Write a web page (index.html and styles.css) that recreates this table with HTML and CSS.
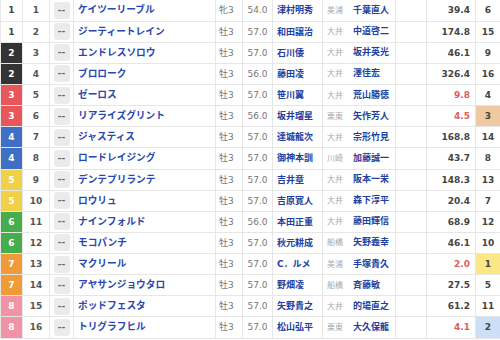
FILE: index.html
```html
<!DOCTYPE html>
<html lang="ja">
<head>
<meta charset="utf-8">
<title>出馬表</title>
<link rel="stylesheet" href="styles.css">
</head>
<body>
<table class="race">
<colgroup>
<col class="c-waku"><col class="c-num"><col class="c-btn"><col class="c-name"><col class="c-sex"><col class="c-wt"><col class="c-jk"><col class="c-tr"><col class="c-blank"><col class="c-odds"><col class="c-pop">
</colgroup>
<tbody>
<tr><td class="waku w1">1</td><td class="num">1</td><td class="btn"><span class="mark">--</span></td><td class="name">ケイツーリーブル</td><td class="sex">牝3</td><td class="wt">54.0</td><td class="jk">津村明秀</td><td class="tr"><span class="area">美浦</span>千葉直人</td><td></td><td class="odds">39.4</td><td class="pop">6</td></tr>
<tr><td class="waku w1">1</td><td class="num">2</td><td class="btn"><span class="mark">--</span></td><td class="name">ジーティートレイン</td><td class="sex">牡3</td><td class="wt">57.0</td><td class="jk">和田譲治</td><td class="tr"><span class="area">大井</span>中道啓二</td><td></td><td class="odds">174.8</td><td class="pop">15</td></tr>
<tr><td class="waku w2">2</td><td class="num">3</td><td class="btn"><span class="mark">--</span></td><td class="name">エンドレスソロウ</td><td class="sex">牡3</td><td class="wt">57.0</td><td class="jk">石川倭</td><td class="tr"><span class="area">大井</span>坂井英光</td><td></td><td class="odds">46.1</td><td class="pop">9</td></tr>
<tr><td class="waku w2">2</td><td class="num">4</td><td class="btn"><span class="mark">--</span></td><td class="name">ブロローク</td><td class="sex">牡3</td><td class="wt">56.0</td><td class="jk">藤田凌</td><td class="tr"><span class="area">大井</span>澤佳宏</td><td></td><td class="odds">326.4</td><td class="pop">16</td></tr>
<tr><td class="waku w3">3</td><td class="num">5</td><td class="btn"><span class="mark">--</span></td><td class="name">ゼーロス</td><td class="sex">牡3</td><td class="wt">57.0</td><td class="jk">笹川翼</td><td class="tr"><span class="area">大井</span>荒山勝徳</td><td></td><td class="odds hot">9.8</td><td class="pop">4</td></tr>
<tr><td class="waku w3">3</td><td class="num">6</td><td class="btn"><span class="mark">--</span></td><td class="name">リアライズグリント</td><td class="sex">牡3</td><td class="wt">56.0</td><td class="jk">坂井瑠星</td><td class="tr"><span class="area">栗東</span>矢作芳人</td><td></td><td class="odds hot">4.5</td><td class="pop p3">3</td></tr>
<tr><td class="waku w4">4</td><td class="num">7</td><td class="btn"><span class="mark">--</span></td><td class="name">ジャスティス</td><td class="sex">牡3</td><td class="wt">57.0</td><td class="jk">達城龍次</td><td class="tr"><span class="area">大井</span>宗形竹見</td><td></td><td class="odds">168.8</td><td class="pop">14</td></tr>
<tr><td class="waku w4">4</td><td class="num">8</td><td class="btn"><span class="mark">--</span></td><td class="name">ロードレイジング</td><td class="sex">牡3</td><td class="wt">57.0</td><td class="jk">御神本訓</td><td class="tr"><span class="area">川崎</span>加藤誠一</td><td></td><td class="odds">43.7</td><td class="pop">8</td></tr>
<tr><td class="waku w5">5</td><td class="num">9</td><td class="btn"><span class="mark">--</span></td><td class="name">デンテプリランテ</td><td class="sex">牡3</td><td class="wt">57.0</td><td class="jk">吉井章</td><td class="tr"><span class="area">大井</span>阪本一栄</td><td></td><td class="odds">148.3</td><td class="pop">13</td></tr>
<tr><td class="waku w5">5</td><td class="num">10</td><td class="btn"><span class="mark">--</span></td><td class="name">ロウリュ</td><td class="sex">牡3</td><td class="wt">57.0</td><td class="jk">吉原寛人</td><td class="tr"><span class="area">大井</span>森下淳平</td><td></td><td class="odds">20.4</td><td class="pop">7</td></tr>
<tr><td class="waku w6">6</td><td class="num">11</td><td class="btn"><span class="mark">--</span></td><td class="name">ナインフォルド</td><td class="sex">牡3</td><td class="wt">56.0</td><td class="jk">本田正重</td><td class="tr"><span class="area">大井</span>藤田輝信</td><td></td><td class="odds">68.9</td><td class="pop">12</td></tr>
<tr><td class="waku w6">6</td><td class="num">12</td><td class="btn"><span class="mark">--</span></td><td class="name">モコパンチ</td><td class="sex">牡3</td><td class="wt">57.0</td><td class="jk">秋元耕成</td><td class="tr"><span class="area">船橋</span>矢野義幸</td><td></td><td class="odds">46.1</td><td class="pop">10</td></tr>
<tr><td class="waku w7">7</td><td class="num">13</td><td class="btn"><span class="mark">--</span></td><td class="name">マクリール</td><td class="sex">牡3</td><td class="wt">57.0</td><td class="jk">C．ルメ</td><td class="tr"><span class="area">美浦</span>手塚貴久</td><td></td><td class="odds hot">2.0</td><td class="pop p1">1</td></tr>
<tr><td class="waku w7">7</td><td class="num">14</td><td class="btn"><span class="mark">--</span></td><td class="name">アヤサンジョウタロ</td><td class="sex">牡3</td><td class="wt">57.0</td><td class="jk">野畑凌</td><td class="tr"><span class="area">船橋</span>斉藤敏</td><td></td><td class="odds">27.5</td><td class="pop">5</td></tr>
<tr><td class="waku w8">8</td><td class="num">15</td><td class="btn"><span class="mark">--</span></td><td class="name">ポッドフェスタ</td><td class="sex">牡3</td><td class="wt">57.0</td><td class="jk">矢野貴之</td><td class="tr"><span class="area">大井</span>的場直之</td><td></td><td class="odds">61.2</td><td class="pop">11</td></tr>
<tr><td class="waku w8">8</td><td class="num">16</td><td class="btn"><span class="mark">--</span></td><td class="name">トリグラフヒル</td><td class="sex">牡3</td><td class="wt">57.0</td><td class="jk">松山弘平</td><td class="tr"><span class="area">栗東</span>大久保龍</td><td></td><td class="odds hot">4.1</td><td class="pop p2">2</td></tr>
</tbody>
</table>
</body>
</html>
```
FILE: styles.css
```css
html, body {
  margin: 0;
  padding: 0;
  background: #ffffff;
}
body {
  font-family: "DejaVu Sans", "Noto Sans CJK JP", sans-serif;
  font-size: 9px;
  color: #444444;
}
.race {
  width: 500px;
  table-layout: fixed;
  border-collapse: collapse;
}
.c-waku { width: 22px; }
.c-num { width: 27px; }
.c-btn { width: 24px; }
.c-name { width: 142px; }
.c-sex { width: 27px; }
.c-wt { width: 30px; }
.c-jk { width: 50px; }
.c-tr { width: 73px; }
.c-blank { width: 31px; }
.c-odds { width: 49px; }
.c-pop { width: 25px; }

.race tr {
  height: 21.125px;
}
.race td {
  border: 1px solid #e6e6e6;
  padding: 0;
  white-space: nowrap;
  overflow: hidden;
  vertical-align: middle;
  line-height: 12px;
}
.race tr:first-child td {
  border-top: none;
}
.waku {
  text-align: center;
  font-weight: bold;
  color: #ffffff;
}
.w1 { background: #ffffff; color: #444444; }
.w2 { background: #333333; }
.w3 { background: #e85659; }
.w4 { background: #3f6fc4; }
.w5 { background: #f0d046; }
.w6 { background: #46ad4c; }
.w7 { background: #f09a38; }
.w8 { background: #f093a6; }
.num {
  text-align: center;
  font-weight: bold;
  color: #555555;
}
.btn {
  text-align: center;
}
.mark {
  display: inline-block;
  width: 16px;
  height: 17px;
  line-height: 17px;
  border-radius: 3px;
  background: #ebebeb;
  color: #666666;
  font-weight: bold;
  font-size: 9px;
  vertical-align: middle;
}
.name {
  padding-left: 4px !important;
  font-weight: bold;
  font-size: 9.7px;
  color: #2848b0;
}
.sex {
  padding-left: 3px !important;
  color: #777777;
}
.wt {
  text-align: center;
  color: #777777;
}
.jk {
  padding-left: 4px !important;
  font-weight: bold;
  color: #22409e;
}
.tr {
  padding-left: 4px !important;
  font-weight: bold;
  color: #22409e;
}
.area {
  font-weight: normal;
  font-size: 8px;
  color: #aaaaaa;
  margin-right: 10px;
}
.odds {
  text-align: right;
  padding-right: 5px !important;
  font-weight: bold;
  color: #444444;
}
.odds.hot {
  color: #e25c5c;
}
.pop {
  text-align: center;
  font-weight: bold;
  color: #444444;
}
.p1 { background: #fbe786; }
.p2 { background: #cddff8; }
.p3 { background: #efc9a2; }
```
